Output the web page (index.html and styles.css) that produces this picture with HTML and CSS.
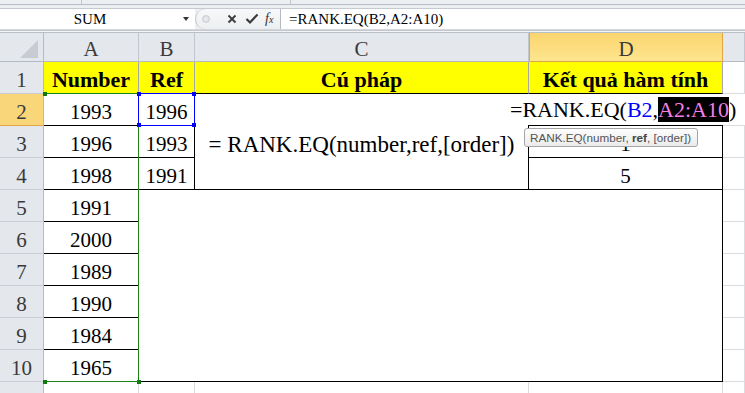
FILE: index.html
```html
<!DOCTYPE html>
<html>
<head>
<meta charset="utf-8">
<link rel="stylesheet" href="styles.css">
</head>
<body>
<div class="top">
  <div class="ribbon"><div class="rb1"></div><div class="rb2"></div></div>
  <div class="fbar">
    <div class="namebox"><span class="nmtext">SUM</span><span class="ddarrow"></span></div>
    <div class="btns">
      <span class="grip"></span>
      <svg class="ic-x" width="10" height="10" viewBox="0 0 10 10"><path d="M1.5 1.5 L8.5 8.5 M8.5 1.5 L1.5 8.5" stroke="#3a3a3a" stroke-width="1.8" fill="none"/></svg>
      <svg class="ic-ok" width="14" height="12" viewBox="0 0 14 12"><path d="M1.5 6 L5 9.5 L12.5 1.5" stroke="#3a3a3a" stroke-width="2.2" fill="none"/></svg>
      <span class="fx">f<span class="fxx">x</span></span>
    </div>
    <div class="finput">=RANK.EQ(B2,A2:A10)</div>
  </div>
  <div class="fsep"></div>
</div>
<div class="sheet">
  <div class="corner"><svg width="43" height="28" viewBox="0 0 43 28"><polygon points="38,7 38,25 20,25" fill="#c8ccd2"/></svg></div>
  <div class="ch">A</div>
  <div class="ch">B</div>
  <div class="ch">C</div>
  <div class="ch sel">D</div>
  <div class="ch"></div>

  <div class="rh">1</div>
  <div class="c y">Number</div>
  <div class="c y">Ref</div>
  <div class="c y">Cú pháp</div>
  <div class="c y">Kết quả hàm tính</div>
  <div class="c"></div>

  <div class="rh sel">2</div>
  <div class="c bk">1993</div>
  <div class="c bk">1996</div>
  <div class="c bk mergec">= RANK.EQ(number,ref,[order])</div>
  <div class="c bk"></div>
  <div class="c"></div>

  <div class="rh">3</div>
  <div class="c bk">1996</div>
  <div class="c bk">1993</div>
  <div class="c bk">1</div>
  <div class="c"></div>

  <div class="rh">4</div>
  <div class="c bk">1998</div>
  <div class="c bk">1991</div>
  <div class="c bk">5</div>
  <div class="c"></div>

  <div class="rh">5</div>
  <div class="c bk">1991</div>
  <div class="c bk mergebig"></div>
  <div class="c"></div>

  <div class="rh">6</div>
  <div class="c bk">2000</div>
  <div class="c"></div>

  <div class="rh">7</div>
  <div class="c bk">1989</div>
  <div class="c"></div>

  <div class="rh">8</div>
  <div class="c bk">1990</div>
  <div class="c"></div>

  <div class="rh">9</div>
  <div class="c bk">1984</div>
  <div class="c"></div>

  <div class="rh">10</div>
  <div class="c bk">1965</div>
  <div class="c"></div>

  <div class="rh last">11</div>
  <div class="c last"></div>
  <div class="c last"></div>
  <div class="c last"></div>
  <div class="c last"></div>
  <div class="c last"></div>

  <div class="greensel">
    <span class="gh gtl"></span><span class="gh gtr"></span><span class="gh gbl"></span><span class="gh gbr"></span>
  </div>
  <div class="bluesel">
    <span class="bh btl"></span><span class="bh btr"></span><span class="bh bbl"></span><span class="bh bbr"></span>
  </div>
  <div class="editor">=RANK.EQ(<span class="refb">B2</span>,<span class="refa">A2:A10</span>)</div>
  <div class="tip">RANK.EQ(number, <b>ref</b>, [order])</div>
</div>
</body>
</html>
```

FILE: styles.css
```css
* { box-sizing: border-box; }
body {
  margin: 0;
  width: 745px;
  height: 393px;
  overflow: hidden;
  background: #fff;
  font-family: "Liberation Serif", "Times New Roman", serif;
}
.top { background: #eceef2; }
.ribbon {
  height: 5px;
  border-bottom: 1px solid #b7bdc6;
  display: flex;
}
.rb1 { width: 82px; border-right: 1px solid #c5cad1; }
.rb2 { width: 209px; border-right: 1px solid #c5cad1; }
.fbar {
  margin-top: 3px;
  height: 22px;
  display: flex;
  border-top: 1px solid #c5cad1;
  border-bottom: 1px solid #d3d7dd;
}
.namebox {
  width: 195px;
  background: #fff;
  display: flex;
  align-items: center;
}
.nmtext {
  width: 180px;
  text-align: center;
  font-size: 15px;
  line-height: 20px;
  color: #000;
}
.ddarrow {
  width: 0; height: 0;
  border-left: 3.5px solid transparent;
  border-right: 3.5px solid transparent;
  border-top: 4px solid #333;
  margin-left: 3px;
}
.btns {
  width: 86px;
  background: linear-gradient(#f7f8f9, #eceef1);
  border-left: 1px solid #c2c7ce;
  border-right: 1px solid #b3b9c1;
  border-radius: 11px 0 0 11px;
  display: flex;
  align-items: center;
}
.grip {
  width: 8px; height: 8px;
  margin-left: 6px;
  border-radius: 50%;
  background: radial-gradient(#eef0f2, #d3d7dc);
  border: 1px solid #c9cdd2;
}
.ic-x { margin-left: 17px; }
.ic-ok { margin-left: 8px; }
.fx {
  margin-left: 6px;
  font-style: italic;
  font-size: 14px;
  color: #333;
}
.fxx { font-size: 10px; }
.finput {
  flex: 1;
  background: #fff;
  font-size: 15px;
  line-height: 20px;
  padding-left: 8px;
  color: #000;
}
.fsep {
  height: 3px;
  border-top: 1px solid #c4c9d0;
  border-bottom: 1px solid #b9bfc7;
  background: #f2f3f5;
}
.sheet {
  position: relative;
  display: grid;
  grid-template-columns: 44px 95px 56px 334px 194px 22px;
  grid-template-rows: 29px repeat(10, 32px) 11px;
  overflow: hidden;
}
.corner {
  background: #e4e7eb;
  border-right: 1px solid #b4bbc4;
  border-bottom: 1px solid #b4bbc4;
}
.ch {
  background: #e4e7eb;
  border-right: 1px solid #c2c7cf;
  border-bottom: 1px solid #b4bbc4;
  font-size: 21px;
  color: #3a3a3a;
  text-align: center;
  padding-top: 4px;
  line-height: 25px;
}
.ch.sel {
  background: linear-gradient(#fad56f, #fee58e);
  border-right: 1px solid #e0a545;
  border-left: 1px solid #e0a545;
  border-bottom: 1px solid #e0a545;
}
.rh {
  background: #e4e7eb;
  border-right: 1px solid #b4bbc4;
  border-bottom: 1px solid #c8cdd4;
  font-size: 21px;
  color: #3a3a3a;
  text-align: center;
  padding-top: 5px;
  line-height: 26px;
}
.rh.sel {
  background: #f9d67a;
  border-bottom: 1px solid #e0a545;
}
.c {
  border-right: 1px solid #dadcdd;
  border-bottom: 1px solid #dadcdd;
  font-size: 21px;
  text-align: center;
  padding-top: 5px;
  line-height: 26px;
  color: #000;
  white-space: nowrap;
}
.last {
  overflow: hidden;
  border-bottom: none;
}
.c.y {
  background: #ffff00;
  font-weight: bold;
  font-size: 22px;
  border-right-color: #a8a8a8;
  border-bottom-color: #000;
}
.c.bk {
  border-right-color: #000;
  border-bottom-color: #000;
}
.mergec {
  grid-row: span 3;
  display: flex;
  align-items: center;
  justify-content: center;
  padding-top: 7px;
  font-size: 23px;
}
.mergebig {
  grid-column: span 3;
  grid-row: span 6;
}
.greensel {
  position: absolute;
  left: 43px;
  top: 60px;
  width: 96px;
  height: 289px;
  border-top: 1px solid #1a861a;
  border-right: 1px solid #1a861a;
  border-bottom: 1px solid #1a861a;
}
.gh {
  position: absolute;
  width: 4px; height: 4px;
  background: #0f7a0f;
}
.gtl { left: 0; top: -2px; }
.gtr { right: -3px; top: -2px; }
.gbl { left: 0; bottom: -3px; }
.gbr { right: -3px; bottom: -3px; }
.bluesel {
  position: absolute;
  left: 138px;
  top: 60px;
  width: 57px;
  height: 33px;
  border: 1px solid #0000ff;
}
.bh {
  position: absolute;
  width: 4px; height: 4px;
  background: #0000ff;
}
.btl { left: -2px; top: -2px; }
.btr { right: -2px; top: -2px; }
.bbl { left: -2px; bottom: -2px; }
.bbr { right: -2px; bottom: -2px; }
.editor {
  position: absolute;
  left: 505px;
  top: 61px;
  width: 240px;
  height: 31px;
  background: #fff;
  font-size: 22px;
  padding-left: 5px;
  padding-top: 1px;
  line-height: 30px;
  white-space: nowrap;
  color: #000;
}
.refb { color: #0000ff; }
.refa { background: #000; color: #f47fe6; }
.tip {
  position: absolute;
  left: 524px;
  top: 95px;
  width: 174px;
  height: 19px;
  border: 1px solid #a6a6a6;
  border-radius: 3px;
  background: linear-gradient(#fdfdfd, #ebebeb);
  font-family: "Liberation Sans", Arial, sans-serif;
  font-size: 11.7px;
  line-height: 17px;
  padding-left: 5px;
  color: #555;
  white-space: nowrap;
}
.tip b { color: #444; }
```
